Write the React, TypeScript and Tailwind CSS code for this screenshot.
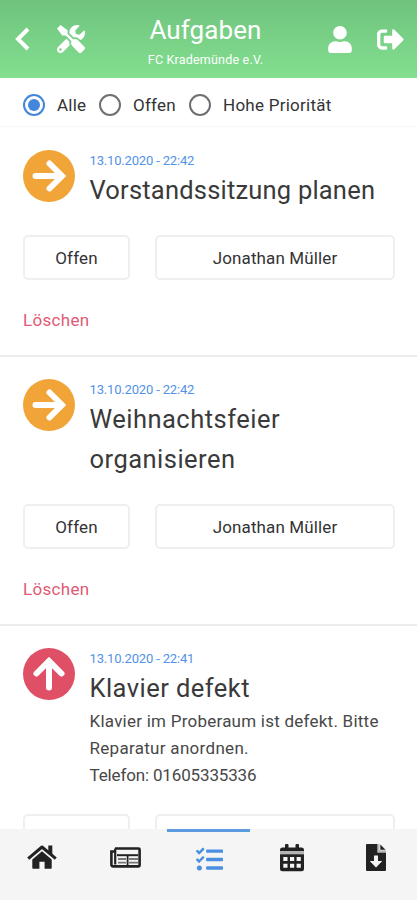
import type { ReactNode } from "react";
import { FaTools, FaUser, FaSignOutAlt, FaTasks } from "react-icons/fa";

type Task = {
  date: string;
  title: ReactNode;
  titleClass: string;
  urgent?: boolean;
  body?: ReactNode;
  status?: string;
  assignee?: string;
};

const tasks: Task[] = [
  {
    date: "13.10.2020 - 22:42",
    title: "Vorstandssitzung planen",
    titleClass: "tracking-[0.2px]",
    status: "Offen",
    assignee: "Jonathan Müller",
  },
  {
    date: "13.10.2020 - 22:42",
    title: (
      <>
        Weihnachtsfeier
        <br />
        organisieren
      </>
    ),
    titleClass: "tracking-[0.48px]",
    status: "Offen",
    assignee: "Jonathan Müller",
  },
  {
    date: "13.10.2020 - 22:41",
    title: "Klavier defekt",
    titleClass: "tracking-[0.45px]",
    urgent: true,
    body: (
      <>
        <div className="tracking-[0.24px]">Klavier im Proberaum ist defekt. Bitte</div>
        <div className="tracking-[0.3px]">Reparatur anordnen.</div>
        <div className="tracking-[-0.15px]">Telefon: 01605335336</div>
      </>
    ),
  },
];

function Radio({ checked }: { checked?: boolean }) {
  return (
    <span
      className={`flex size-[22px] shrink-0 items-center justify-center rounded-full border-2 ${
        checked ? "border-[#4287dc]" : "border-[#707070]"
      }`}
    >
      {checked && <span className="size-3 rounded-full bg-[#4287dc]" />}
    </span>
  );
}

function Priority({ urgent }: { urgent?: boolean }) {
  return (
    <span
      className={`mt-[22px] flex size-[52px] shrink-0 items-center justify-center rounded-full ${
        urgent ? "bg-[#df5067]" : "bg-[#f1a437]"
      }`}
    >
      <svg
        viewBox="0 0 52 52"
        className={`size-[52px] ${urgent ? "-rotate-90" : ""}`}
        fill="none"
        stroke="white"
        strokeWidth="6"
        strokeLinecap="round"
      >
        <path d="M12.5 26H38" />
        <path d="M26.5 13.5L39 26L26.5 38.5" />
      </svg>
    </span>
  );
}

function HomeIcon() {
  return (
    <svg viewBox="0 0 30 24" className="h-6 w-[30px]">
      <path d="M1.2 13.6L15 2L28.8 13.6" fill="none" stroke="currentColor" strokeWidth="3" strokeLinejoin="round" />
      <path d="M21.3 0.5H25.3V10.5L21.3 7Z" fill="currentColor" />
      <path d="M15 6.3L24.7 14.4V23Q24.7 23.8 23.9 23.8H17.6V16.8H12.4V23.8H6.1Q5.3 23.8 5.3 23V14.4Z" fill="currentColor" />
    </svg>
  );
}

function NewspaperIcon() {
  return (
    <svg viewBox="0 0 31 21" className="h-[21px] w-[31px]" fill="none" stroke="currentColor" strokeWidth="2.6">
      <path d="M5 1.5H28.5Q29.6 1.5 29.6 2.6V18Q29.6 19.4 28.2 19.4H3.2Q1.4 19.4 1.4 17.6V4.5H5" />
      <path d="M5.2 1.5V17.5" strokeWidth="2.2" />
      <path d="M7 8.2H28" strokeWidth="2" />
      <path d="M8 12H16M19 12H28M8 15.7H16M19 15.7H28" stroke="#777" strokeWidth="1.8" />
      <path d="M17.6 8.2V18.5" strokeWidth="1.8" />
    </svg>
  );
}

function CalendarIcon() {
  return (
    <svg viewBox="0 0 24 28" className="h-7 w-6">
      <path
        fill="currentColor"
        d="M5 1Q5 0 6 0H7.5Q8.5 0 8.5 1V3.5H15.5V1Q15.5 0 16.5 0H18Q19 0 19 1V3.5H21.5Q24 3.5 24 6V7H0V6Q0 3.5 2.5 3.5H5Z"
      />
      <path fill="#b3b3b3" d="M0 7H24V10.3H0Z" />
      <path
        fill="currentColor"
        fillRule="evenodd"
        d="M0 10.3H24V25Q24 27.3 21.7 27.3H2.3Q0 27.3 0 25ZM3.3 13V17H7.5V13ZM10 13V17H14.2V13ZM16.6 13V17H20.8V13ZM3.3 19.7V23.7H7.5V19.7ZM10 19.7V23.7H14.2V19.7ZM16.6 19.7V23.7H20.8V19.7Z"
      />
    </svg>
  );
}

function DownloadIcon() {
  return (
    <svg viewBox="0 0 20 27" className="h-[27px] w-5">
      <path fill="currentColor" d="M1 0H12V8H20V26Q20 27 19 27H1Q0 27 0 26V1Q0 0 1 0Z" />
      <path fill="#b9b9b9" d="M11.3 0H13.5V6.3H20V8.7H11.3Z" />
      <path fill="currentColor" d="M14.3 0.5L19.6 5.8H14.3Z" />
      <path fill="#f5f5f5" d="M8 11.5H12V17H16.3L10 23.6L3.7 17H8Z" />
    </svg>
  );
}

function TaskRow({ task }: { task: Task }) {
  const button = "h-[45px] rounded-[5px] border-2 border-[#efefef]";
  return (
    <article className="shrink-0 border-b-2 border-[#ececec] pr-[22px] pl-[23px]">
      <div className="flex gap-[14.5px]">
        <Priority urgent={task.urgent} />
        <div className="pt-6">
          <div className="text-[13px] leading-[18px] tracking-[-0.17px] whitespace-nowrap text-[#5292e8]">{task.date}</div>
          <h2 className={`text-[25.5px] leading-10 whitespace-nowrap text-[#3a3a3a] ${task.titleClass}`}>{task.title}</h2>
          {task.body && <div className="text-[17px] leading-[27px] whitespace-nowrap text-[#484848]">{task.body}</div>}
        </div>
      </div>
      <div className="mt-[25px] flex gap-[25px] text-[17px] text-[#333]">
        <button className={`${button} w-[107px] pt-[2px] tracking-[0.2px]`}>{task.status}</button>
        <button className={`${button} flex-1 pt-[2px] tracking-[0.12px]`}>{task.assignee}</button>
      </div>
      {task.status && (
        <div className="mt-[27px] h-12 text-[17px] leading-[26px] tracking-[0.3px] text-[#e05a74]">Löschen</div>
      )}
    </article>
  );
}

export default function App() {
  return (
    <div className="flex h-[900px] w-full flex-col overflow-hidden bg-white font-['Roboto',sans-serif]">
      <header className="grid h-[78px] shrink-0 grid-cols-[1fr_130px_1fr] bg-linear-to-b from-[#6fc37d] to-[#83df90] text-white">
        <div className="flex items-center gap-[27px] pl-[15px]">
          <svg viewBox="0 0 15 24" className="h-6 w-[15px]" fill="none" stroke="currentColor" strokeWidth="4">
            <path d="M13 2L3 12L13 22" />
          </svg>
          <FaTools className="size-7" />
        </div>
        <div className="-ml-[6px] pt-[15px] text-center whitespace-nowrap">
          <h1 className="text-[26px] leading-[30px] tracking-[0.1px]">Aufgaben</h1>
          <p className="mt-[7px] text-[12.5px] leading-4 tracking-[0.2px]">FC Krademünde e.V.</p>
        </div>
        <div className="flex items-center justify-end gap-[25px] pr-[13px]">
          <FaUser className="h-[27px] w-[24px]" />
          <FaSignOutAlt className="size-[27px]" />
        </div>
      </header>
      <div className="flex h-[49px] shrink-0 items-center border-b border-[#f6f6f6] pt-[6px] pl-[23px] text-[17px] tracking-[0.25px] text-[#333]">
        <Radio checked />
        <span className="ml-3 w-[42px] pt-px">Alle</span>
        <Radio />
        <span className="ml-3 w-[56px] pt-px">Offen</span>
        <Radio />
        <span className="ml-3 pt-px">Hohe Priorität</span>
      </div>
      <main className="flex min-h-0 flex-1 flex-col overflow-hidden pt-px">
        {tasks.map((t, i) => (
          <TaskRow key={i} task={t} />
        ))}
      </main>
      <nav className="grid h-[71px] shrink-0 grid-cols-5 bg-[#f5f5f5] text-[#222]">
        <div className="flex justify-center pt-4">
          <HomeIcon />
        </div>
        <div className="flex justify-center pt-[18px]">
          <NewspaperIcon />
        </div>
        <div className="flex justify-center border-t-[3px] border-[#5d9be0] pt-[14px] pl-[2px] text-[#4b8fe0]">
          <FaTasks className="size-[27px]" />
        </div>
        <div className="flex justify-center pt-[15px]">
          <CalendarIcon />
        </div>
        <div className="flex justify-center pt-[15px] pl-[2px]">
          <DownloadIcon />
        </div>
      </nav>
    </div>
  );
}
